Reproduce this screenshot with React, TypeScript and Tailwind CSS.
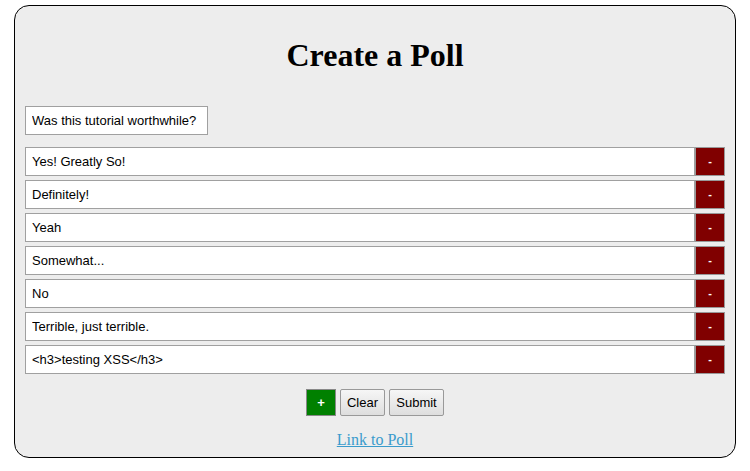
const options = [
  "Yes! Greatly So!",
  "Definitely!",
  "Yeah",
  "Somewhat...",
  "No",
  "Terrible, just terrible.",
  "<h3>testing XSS</h3>",
];

export default function App() {
  return (
    <div className="w-[750px] h-[471px] bg-white pt-[5px] pl-[14px]">
      <div className="w-[722px] h-[453px] bg-[#ededed] border border-black rounded-[15px] px-[10px] pt-[10px]">
        <h1 className="text-center text-[32px] font-bold text-black my-[21px] leading-[37px]" style={{ fontFamily: '"Liberation Serif", serif' }}>
          Create a Poll
        </h1>
        <div className="pt-[11px]" style={{ fontFamily: '"Liberation Sans", Arial, sans-serif' }}>
          <input
            className="block w-[183px] h-[29px] bg-white border border-[#a0a0a0] px-[6px] text-[13px] text-black outline-none"
            defaultValue="Was this tutorial worthwhile?"
          />
          <div className="mt-[12px] flex flex-col gap-[4px]">
            {options.map((o) => (
              <div key={o} className="flex h-[29px]">
                <input
                  className="flex-1 h-[29px] bg-white border border-[#a0a0a0] px-[6px] text-[13px] text-black outline-none"
                  defaultValue={o}
                />
                <button className="w-[30px] h-[29px] bg-[#800000] border border-[#999] text-white text-[11px] font-bold flex items-center justify-center">
                  -
                </button>
              </div>
            ))}
          </div>
          <div className="mt-[15px] flex justify-center gap-[4px] h-[27px]">
            <button className="w-[30px] h-[27px] bg-[#008000] border border-[#888] text-white text-[13px] font-bold">
              +
            </button>
            <button className="w-[45px] h-[27px] bg-gradient-to-b from-[#f6f6f6] to-[#dedede] border border-[#999] rounded-[2px] text-[13px] text-black">
              Clear
            </button>
            <button className="w-[55px] h-[27px] bg-gradient-to-b from-[#f6f6f6] to-[#dedede] border border-[#999] rounded-[2px] text-[13px] text-black">
              Submit
            </button>
          </div>
        </div>
        <div className="text-center mt-[11px]">
          <a href="#" className="text-[16px] text-[#3a9bcc] underline" style={{ fontFamily: '"Liberation Serif", serif' }}>
            Link to Poll
          </a>
        </div>
      </div>
    </div>
  );
}
